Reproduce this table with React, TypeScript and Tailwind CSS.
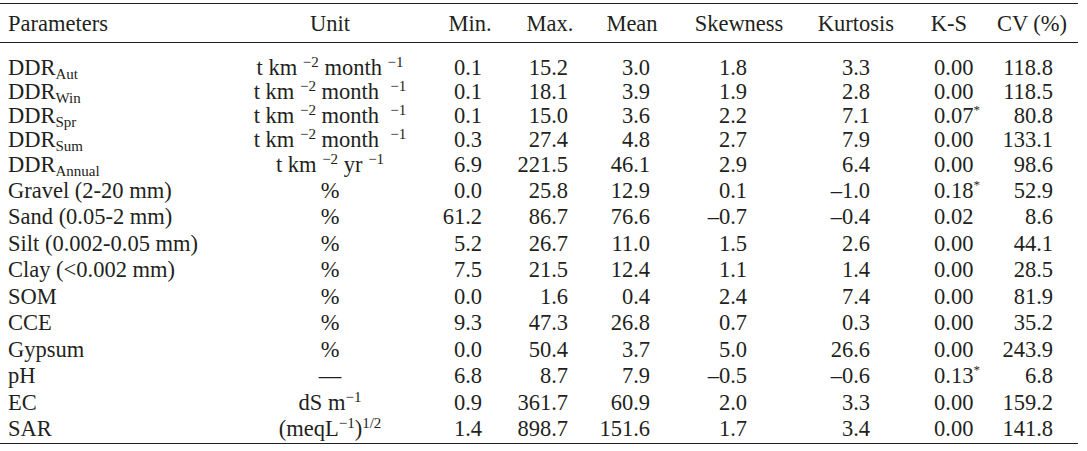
import React from "react";

const cols = "grid grid-cols-[230px_200px_80px_80px_84px_130px_104px_82px_88px]";

// data cell alignment per column (numbers sit right-aligned inside the column)
const cellCls = [
  "pl-2 text-left",
  "text-center",
  "text-right pr-[28px]",
  "text-right pr-[22px]",
  "text-right pr-[24px]",
  "text-right pr-[57px]",
  "text-right pr-[38px]",
  "text-left pl-[26px]",
  "text-right pr-[25px]",
];

const headCls = [
  "pl-2 text-left",
  "text-center",
  "text-center",
  "text-center",
  "text-center",
  "text-center",
  "text-center",
  "text-center",
  "text-center pr-1",
];

// the DDR rows sit a little tighter than the soil rows
const rowCls = [
  "h-[24px] leading-[24px]",
  "h-[24px] leading-[24px]",
  "h-[24px] leading-[24px]",
  "h-[24px] leading-[24px]",
  "h-[26px] leading-[26px]",
];

function Sub({ children }: { children: React.ReactNode }) {
  return <span className="text-[15px] leading-[0] align-[-4px]">{children}</span>;
}

function Sup({ children }: { children: React.ReactNode }) {
  return <span className="text-[15px] leading-[0] align-[8px]">{children}</span>;
}

function Star() {
  return <span className="inline-block w-0 text-[13px] leading-[0] align-[9px]">*</span>;
}

const monthA = (
  <>
    t km <Sup>−2</Sup> month <Sup>−1</Sup>
  </>
);
const monthB = (
  <>
    t km <Sup>−2</Sup> month&nbsp; <Sup>−1</Sup>
  </>
);

type Row = [React.ReactNode, React.ReactNode, string, string, string, string, string, React.ReactNode, string];

const ks = (v: string) => (
  <>
    {v}
    <Star />
  </>
);

const rows: Row[] = [
  [<>DDR<Sub>Aut</Sub></>, monthA, "0.1", "15.2", "3.0", "1.8", "3.3", "0.00", "118.8"],
  [<>DDR<Sub>Win</Sub></>, monthB, "0.1", "18.1", "3.9", "1.9", "2.8", "0.00", "118.5"],
  [<>DDR<Sub>Spr</Sub></>, monthB, "0.1", "15.0", "3.6", "2.2", "7.1", ks("0.07"), "80.8"],
  [<>DDR<Sub>Sum</Sub></>, monthB, "0.3", "27.4", "4.8", "2.7", "7.9", "0.00", "133.1"],
  [
    <>DDR<Sub>Annual</Sub></>,
    <>
      t km <Sup>−2</Sup> yr <Sup>−1</Sup>
    </>,
    "6.9", "221.5", "46.1", "2.9", "6.4", "0.00", "98.6",
  ],
  ["Gravel (2-20 mm)", "%", "0.0", "25.8", "12.9", "0.1", "–1.0", ks("0.18"), "52.9"],
  ["Sand (0.05-2 mm)", "%", "61.2", "86.7", "76.6", "–0.7", "–0.4", "0.02", "8.6"],
  ["Silt (0.002-0.05 mm)", "%", "5.2", "26.7", "11.0", "1.5", "2.6", "0.00", "44.1"],
  ["Clay (<0.002 mm)", "%", "7.5", "21.5", "12.4", "1.1", "1.4", "0.00", "28.5"],
  ["SOM", "%", "0.0", "1.6", "0.4", "2.4", "7.4", "0.00", "81.9"],
  ["CCE", "%", "9.3", "47.3", "26.8", "0.7", "0.3", "0.00", "35.2"],
  ["Gypsum", "%", "0.0", "50.4", "3.7", "5.0", "26.6", "0.00", "243.9"],
  ["pH", "—", "6.8", "8.7", "7.9", "–0.5", "–0.6", ks("0.13"), "6.8"],
  ["EC", <>dS m<Sup>−1</Sup></>, "0.9", "361.7", "60.9", "2.0", "3.3", "0.00", "159.2"],
  ["SAR", <>(meqL<Sup>−1</Sup>)<Sup>1/2</Sup></>, "1.4", "898.7", "151.6", "1.7", "3.4", "0.00", "141.8"],
];

const heads = ["Parameters", "Unit", "Min.", "Max.", "Mean", "Skewness", "Kurtosis", "K-S", "CV (%)"];

export default function App() {
  return (
    <div className="w-[1087px] h-[451px] bg-white pt-[3px] text-[#231f20] [font-family:'Liberation_Serif','Times_New_Roman',serif] text-[22.5px]">
      <div className="w-[1078px] border-t-[1.5px] border-b-[1.5px] border-[#231f20]">
        <div className={`${cols} leading-[25px] pt-[7px] pb-[6px] border-b-[1.5px] border-[#231f20]`}>
          {heads.map((h, i) => (
            <div key={i} className={`whitespace-nowrap ${headCls[i]}`}>
              {h}
            </div>
          ))}
        </div>
        <div className="pt-[12.5px]">
          {rows.map((r, ri) => (
            <div key={ri} className={`${cols} ${rowCls[ri] ?? "h-[26.5px] leading-[26.5px]"}`}>
              {r.map((c, ci) => (
                <div key={ci} className={`whitespace-nowrap ${cellCls[ci]}`}>
                  {c}
                </div>
              ))}
            </div>
          ))}
        </div>
      </div>
    </div>
  );
}
